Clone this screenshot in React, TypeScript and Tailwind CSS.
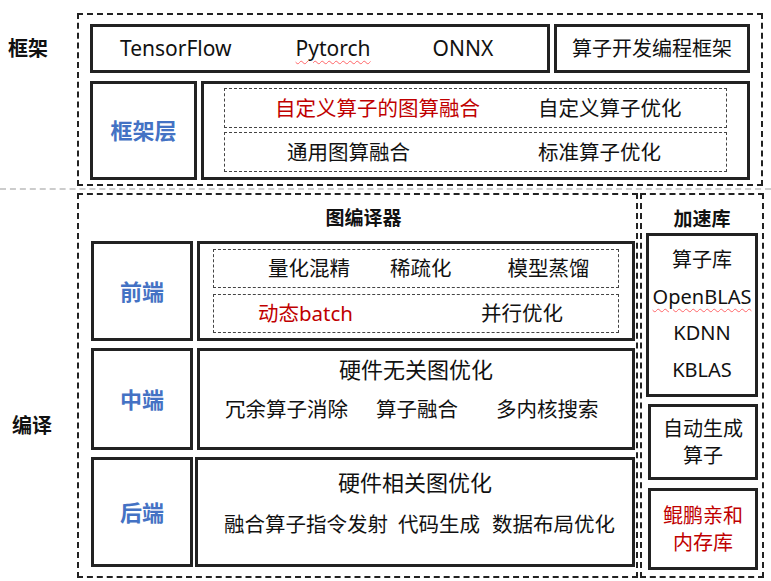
export default function App() {
  const f = { fontFamily: '"Noto Sans", "Noto Sans CJK SC", sans-serif' };
  const box = "border-[3px] border-[#222] bg-white";
  const dash = "border border-dashed border-[#444]";
  return (
    <div style={f} className="w-[771px] h-[581px] bg-white text-[#111] relative">
      <div className="flex h-[188px]">
        <div className="w-[77px] pt-[34px] pl-[8px] text-[20px] font-bold">框架</div>
        <div className="mt-[13px] w-[686px] h-[173px] border-2 border-dashed border-[#222] px-[11px] pt-[9px] flex flex-col gap-[8px]">
          <div className="flex gap-[4px] h-[49px]">
            <div className={`${box} w-[460px] flex items-center text-[21px]`}>
              <span className="ml-[27px]">TensorFlow</span>
              <span className="ml-[64px] underline decoration-wavy decoration-red-400 decoration-1 underline-offset-4">Pytorch</span>
              <span className="ml-[62px]">ONNX</span>
            </div>
            <div className={`${box} w-[196px] flex items-center justify-center text-[20px]`}>算子开发编程框架</div>
          </div>
          <div className="flex gap-[4px] h-[99px]">
            <div className={`${box} w-[107px] flex items-center justify-center text-[22px] font-bold text-[#4472c4]`}>框架层</div>
            <div className={`${box} w-[549px] px-[20px] pt-[4px] flex flex-col gap-[4px]`}>
              <div className={`${dash} h-[40px] flex items-center text-[20.5px]`}>
                <span className="ml-[50px] text-[#c00000]">自定义算子的图算融合</span>
                <span className="ml-[58px]">自定义算子优化</span>
              </div>
              <div className={`${dash} h-[40px] flex items-center text-[20.5px]`}>
                <span className="ml-[62px]">通用图算融合</span>
                <span className="ml-[128px]">标准算子优化</span>
              </div>
            </div>
          </div>
        </div>
      </div>
      <div className="h-0 border-t-2 border-dashed border-[#ccc]" />
      <div className="flex mt-[3px]">
        <div className="w-[77px] pt-[218px] pl-[12px] text-[20px] font-bold">编译</div>
        <div className="w-[561px] h-[385px] border-2 border-dashed border-[#222] pl-[12px] flex flex-col">
          <div className="h-[46px] flex items-center justify-center text-[19px] font-bold">图编译器</div>
          <div className="flex gap-[4px] h-[100px]">
            <div className={`${box} w-[102px] flex items-center justify-center text-[22px] font-bold text-[#4472c4]`}>前端</div>
            <div className={`${box} w-[438px] px-[13px] pt-[5px] flex flex-col gap-[6px]`}>
              <div className={`${dash} h-[39px] flex items-center text-[20.5px]`}>
                <span className="ml-[54px]">量化混精</span>
                <span className="ml-[40px]">稀疏化</span>
                <span className="ml-[56px]">模型蒸馏</span>
              </div>
              <div className={`${dash} h-[39px] flex items-center text-[20.5px]`}>
                <span className="ml-[44px] text-[#c00000]">动态batch</span>
                <span className="ml-[128px]">并行优化</span>
              </div>
            </div>
          </div>
          <div className="flex gap-[4px] h-[102px] mt-[7px]">
            <div className={`${box} w-[102px] flex items-center justify-center text-[22px] font-bold text-[#4472c4]`}>中端</div>
            <div className={`${box} w-[438px] flex flex-col text-[20.5px]`}>
              <div className="text-center mt-[2px] text-[22px]">硬件无关图优化</div>
              <div className="flex mt-[8px]">
                <span className="ml-[25px]">冗余算子消除</span>
                <span className="ml-[28px]">算子融合</span>
                <span className="ml-[38px]">多内核搜索</span>
              </div>
            </div>
          </div>
          <div className="flex gap-[2px] h-[110px] mt-[7px]">
            <div className={`${box} w-[102px] flex items-center justify-center text-[22px] font-bold text-[#4472c4]`}>后端</div>
            <div className={`${box} w-[440px] flex flex-col text-[20.5px]`}>
              <div className="text-center mt-[6px] text-[22px]">硬件相关图优化</div>
              <div className="flex mt-[10px]">
                <span className="ml-[26px]">融合算子指令发射</span>
                <span className="ml-[10px]">代码生成</span>
                <span className="ml-[12px]">数据布局优化</span>
              </div>
            </div>
          </div>
        </div>
        <div className="ml-[2px] w-[124px] h-[385px] border-2 border-dashed border-[#222] px-[4px] flex flex-col">
          <div className="h-[38px] flex items-end justify-center text-[19px] font-bold">加速库</div>
          <div className={`${box} h-[164px] flex flex-col items-center justify-around py-[6px] text-[20px]`}>
            <span>算子库</span>
            <span className="underline decoration-wavy decoration-red-400 decoration-1 underline-offset-4">OpenBLAS</span>
            <span>KDNN</span>
            <span>KBLAS</span>
          </div>
          <div className={`${box} ml-[2px] h-[76px] mt-[7px] flex items-center justify-center text-center text-[20px] leading-[27px]`}>自动生成<br />算子</div>
          <div className={`${box} ml-[2px] h-[82px] mt-[8px] flex items-center justify-center text-center text-[20px] leading-[27px] text-[#c00000]`}>鲲鹏亲和<br />内存库</div>
        </div>
      </div>
    </div>
  );
}
